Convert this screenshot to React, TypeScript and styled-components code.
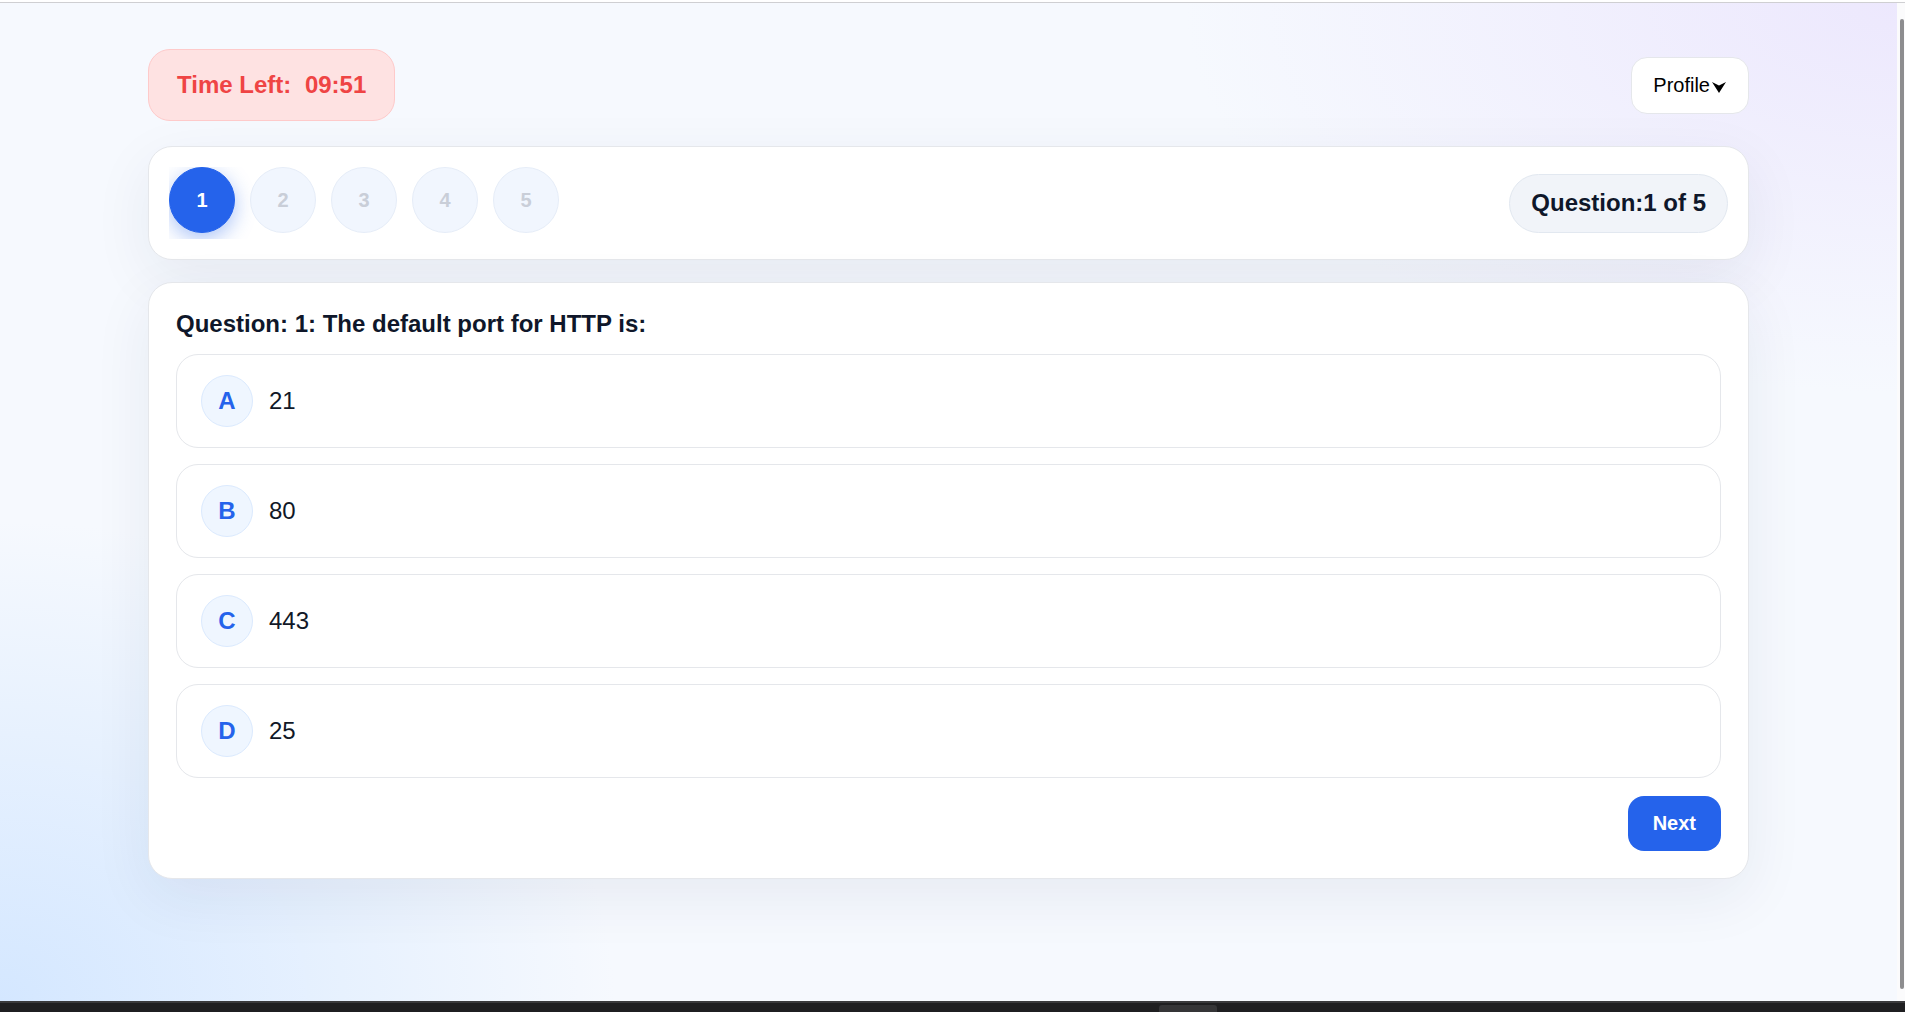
import React from "react";
import styled, { createGlobalStyle } from "styled-components";

const GlobalStyle = createGlobalStyle`
  html, body { margin: 0; padding: 0; height: 100%; }
  body {
    font-family: "Liberation Sans", Arial, Helvetica, sans-serif;
    overflow: hidden;
    color: #111827;
  }
  *, *::before, *::after { box-sizing: border-box; }
`;

const Shell = styled.div`
  display: flex;
  flex-direction: column;
  height: 100vh;
`;

const TopLine = styled.div`
  flex-shrink: 0;
  height: 3px;
  background: #ffffff;
  border-bottom: 1px solid #cfcfd2;
`;

const Middle = styled.div`
  flex: 1;
  display: flex;
  min-height: 0;
`;

const Main = styled.main`
  flex: 1;
  overflow: hidden;
  background:
    radial-gradient(ellipse 950px 520px at 100% 0%, rgba(236, 231, 253, 0.95), rgba(236, 231, 253, 0) 75%),
    radial-gradient(ellipse 820px 640px at 0% 100%, #d4e7ff, rgba(214, 232, 255, 0) 75%),
    #f6f9fe;
`;

const Rail = styled.div`
  flex-shrink: 0;
  width: 8px;
  background: #fbfbfc;
  display: flex;
  justify-content: flex-end;
  padding: 16px 1px 12px 0;
`;

const Thumb = styled.div`
  width: 4px;
  height: 100%;
  border-radius: 2px;
  background: #8d8d8f;
`;

const Taskbar = styled.div`
  flex-shrink: 0;
  height: 11px;
  background: #1f1f21;
  border-top: 2px solid #3a3a3c;
  display: flex;
  justify-content: center;
  padding-left: 470px;
`;

const TaskItem = styled.div`
  width: 58px;
  height: 9px;
  margin-top: 2px;
  border-radius: 3px 3px 0 0;
  background: #353537;
`;

const Container = styled.div`
  width: 1601px;
  margin: 0 auto;
  padding-top: 46px;
`;

const Header = styled.header`
  display: flex;
  align-items: center;
  justify-content: space-between;
`;

const Timer = styled.div`
  height: 72px;
  display: flex;
  align-items: center;
  padding: 0 28px;
  background: #fee2e2;
  border: 1px solid #fecaca;
  border-radius: 22px;
  color: #ef4444;
  font-size: 24px;
  font-weight: 700;
  white-space: pre;
`;

const TimeValue = styled.span`
  margin-left: 7px;
`;

const ProfileButton = styled.button`
  height: 57px;
  display: inline-flex;
  align-items: center;
  padding: 0 22px 0 21px;
  background: #ffffff;
  border: 1px solid #e5e7eb;
  border-radius: 16px;
  font-family: inherit;
  font-size: 20px;
  color: #000000;
  cursor: pointer;
`;

const Caret = styled.svg`
  width: 14px;
  height: 11px;
  margin-left: 2px;
  margin-top: 4px;
`;

const Card = styled.section<{ $gap: number }>`
  margin-top: ${(p) => p.$gap}px;
  background: #ffffff;
  border: 1px solid #e5e7eb;
  border-radius: 24px;
  box-shadow: 0 18px 60px rgba(30, 41, 80, 0.07);
`;

const StepperCard = styled(Card)`
  display: flex;
  align-items: center;
  justify-content: space-between;
  padding: 20px;
`;

const Steps = styled.div`
  display: flex;
  gap: 15px;
  overflow-x: auto;
  padding-bottom: 6px;
  scrollbar-width: none;
`;

const Step = styled.div<{ $active?: boolean }>`
  flex-shrink: 0;
  width: 66px;
  height: 66px;
  border-radius: 50%;
  display: flex;
  align-items: center;
  justify-content: center;
  font-size: 20px;
  font-weight: 700;
  background: ${(p) => (p.$active ? "#2563eb" : "#f1f6fe")};
  border: 1px solid ${(p) => (p.$active ? "#2563eb" : "#e6edf8")};
  color: ${(p) => (p.$active ? "#ffffff" : "#c9ced8")};
  box-shadow: ${(p) => (p.$active ? "0 6px 20px rgba(37, 99, 235, 0.38)" : "none")};
`;

const CountBadge = styled.div`
  height: 59px;
  display: flex;
  align-items: center;
  padding: 0 21px;
  border-radius: 30px;
  background: #f1f4f9;
  border: 1px solid #e2e8f0;
  color: #0f172a;
  font-size: 24px;
  font-weight: 700;
`;

const QuestionCard = styled(Card)`
  padding: 27px;
  display: flex;
  flex-direction: column;
`;

const Title = styled.h2`
  margin: 0 0 16px 0;
  font-size: 24px;
  font-weight: 700;
  color: #0f172a;
  line-height: normal;
`;

const Options = styled.div`
  display: flex;
  flex-direction: column;
  gap: 16px;
`;

const Option = styled.button`
  height: 94px;
  display: flex;
  align-items: center;
  gap: 16px;
  padding: 0 24px;
  background: #ffffff;
  border: 1px solid #e5e7eb;
  border-radius: 22px;
  font-family: inherit;
  text-align: left;
  cursor: pointer;
`;

const Letter = styled.span`
  width: 52px;
  height: 52px;
  flex-shrink: 0;
  border-radius: 50%;
  display: flex;
  align-items: center;
  justify-content: center;
  background: #eff6ff;
  border: 1px solid #dbeafe;
  color: #2563eb;
  font-size: 24px;
  font-weight: 700;
`;

const OptionText = styled.span`
  font-size: 24px;
  color: #111827;
`;

const Footer = styled.div`
  display: flex;
  justify-content: flex-end;
  margin-top: 18px;
`;

const NextButton = styled.button`
  height: 55px;
  padding: 0 25px;
  border: none;
  border-radius: 16px;
  background: #2563eb;
  color: #ffffff;
  font-family: inherit;
  font-size: 20px;
  font-weight: 700;
  cursor: pointer;
`;

const options = [
  { key: "A", text: "21" },
  { key: "B", text: "80" },
  { key: "C", text: "443" },
  { key: "D", text: "25" },
];

export default function App() {
  return (
    <Shell>
      <GlobalStyle />
      <TopLine />
      <Middle>
        <Main>
          <Container>
            <Header>
              <Timer>
                Time Left:<TimeValue> 09:51</TimeValue>
              </Timer>
              <ProfileButton>
                Profile
                <Caret viewBox="0 0 14 11">
                  <path d="M0 0 L7 3.6 L14 0 L7 11 Z" fill="#000" />
                </Caret>
              </ProfileButton>
            </Header>

            <StepperCard $gap={25}>
              <Steps>
                {[1, 2, 3, 4, 5].map((n) => (
                  <Step key={n} $active={n === 1}>
                    {n}
                  </Step>
                ))}
              </Steps>
              <CountBadge>Question:1 of 5</CountBadge>
            </StepperCard>

            <QuestionCard $gap={22}>
              <Title>Question: 1: The default port for HTTP is:</Title>
              <Options>
                {options.map((o) => (
                  <Option key={o.key}>
                    <Letter>{o.key}</Letter>
                    <OptionText>{o.text}</OptionText>
                  </Option>
                ))}
              </Options>
              <Footer>
                <NextButton>Next</NextButton>
              </Footer>
            </QuestionCard>
          </Container>
        </Main>
        <Rail>
          <Thumb />
        </Rail>
      </Middle>
      <Taskbar>
        <TaskItem />
      </Taskbar>
    </Shell>
  );
}
